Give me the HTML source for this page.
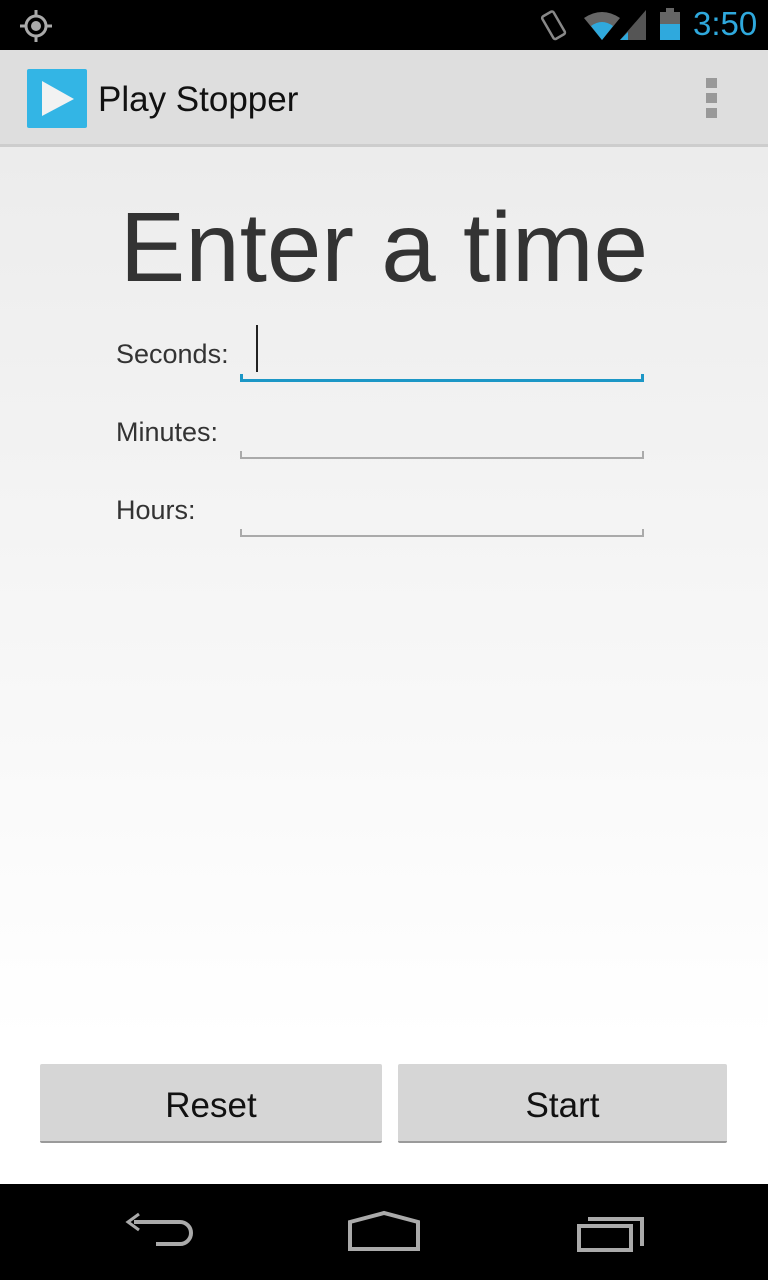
<!DOCTYPE html>
<html><head><style>
*{margin:0;padding:0;box-sizing:border-box}
body{width:768px;height:1280px;position:relative;overflow:hidden;font-family:"Liberation Sans",sans-serif;background:linear-gradient(#ececec 146px,#fff 1040px)}
.abs{position:absolute}
.lbl{position:absolute;left:116px;font-size:27px;color:#333}
.line{position:absolute;left:240px;width:404px;height:8px;border:2px solid #aaa;border-top:none}
.btn{position:absolute;top:1064px;height:79px;background:#d6d6d6;border-bottom:2px solid #9a9a9a;border-radius:2px;font-size:35px;color:#111;text-align:center;line-height:84px}
</style></head><body>
<div class="abs" style="left:0;top:0;width:768px;height:50px;background:#000"></div>
<svg class="abs" style="left:18px;top:8px" width="36" height="36" viewBox="0 0 36 36"><circle cx="18" cy="18" r="10" fill="none" stroke="#aaa" stroke-width="3"/><circle cx="18" cy="18" r="5" fill="#aaa"/><path d="M18 2v6M18 28v6M2 18h6M28 18h6" stroke="#aaa" stroke-width="3"/></svg>
<svg class="abs" style="left:538px;top:8px" width="34" height="36" viewBox="0 0 34 36"><rect x="9" y="4" width="13" height="26" rx="2" transform="rotate(-30 16 17)" fill="none" stroke="#888" stroke-width="2.5"/></svg>
<svg class="abs" style="left:582px;top:10px" width="40" height="32" viewBox="0 0 40 32"><path d="M2 8 Q20 -4 38 8 L20 30Z" fill="#666"/><path d="M9 16 Q20 8 31 16 L20 30Z" fill="#2fa9dd"/></svg>
<svg class="abs" style="left:620px;top:10px" width="28" height="32" viewBox="0 0 28 32"><path d="M26 0V30H0Z" fill="#555"/><path d="M8 22V30H0Z" fill="#2fa9dd"/></svg>
<div class="abs" style="left:660px;top:12px;width:20px;height:28px;background:#666"></div>
<div class="abs" style="left:666px;top:8px;width:8px;height:4px;background:#666"></div>
<div class="abs" style="left:660px;top:24px;width:20px;height:16px;background:#2fa9dd"></div>
<div class="abs" style="left:693px;top:5px;font-size:33px;color:#2fa9dd">3:50</div>
<div class="abs" style="left:0;top:50px;width:768px;height:94px;background:#dedede"></div>
<div class="abs" style="left:0;top:144px;width:768px;height:3px;background:#cdcdcd"></div>
<div class="abs" style="left:27px;top:69px;width:60px;height:59px;background:#33b5e5;border-radius:2px"></div>
<svg class="abs" style="left:27px;top:69px" width="60" height="59"><path d="M15 12L47 30L15 47Z" fill="#f2f2f2"/></svg>
<div class="abs" style="left:98px;top:80px;font-size:35px;color:#111">Play Stopper</div>
<div class="abs" style="left:706px;top:78px;width:11px;height:10px;background:#999"></div>
<div class="abs" style="left:706px;top:93px;width:11px;height:10px;background:#999"></div>
<div class="abs" style="left:706px;top:108px;width:11px;height:10px;background:#999"></div>
<div class="abs" style="left:0;top:191px;width:768px;text-align:center;font-size:98px;color:#333;letter-spacing:0px">Enter a time</div>
<div class="lbl" style="top:339px">Seconds:</div>
<div class="abs" style="left:256px;top:325px;width:2px;height:47px;background:#222"></div>
<div class="line" style="top:374px;border-color:#1c97c6;border-width:3px"></div>
<div class="lbl" style="top:417px">Minutes:</div>
<div class="line" style="top:451px"></div>
<div class="lbl" style="top:495px">Hours:</div>
<div class="line" style="top:529px"></div>
<div class="btn" style="left:40px;width:342px">Reset</div>
<div class="btn" style="left:398px;width:329px">Start</div>
<div class="abs" style="left:0;top:1184px;width:768px;height:96px;background:#000"></div>
<svg class="abs" style="left:120px;top:1210px" width="80" height="50" viewBox="0 0 80 50"><path d="M14 12H60A11 11 0 0 1 60 34H36" fill="none" stroke="#aaa" stroke-width="4"/><path d="M19 4L8 12L19 20" fill="none" stroke="#aaa" stroke-width="3"/></svg>
<svg class="abs" style="left:345px;top:1210px" width="80" height="45" viewBox="0 0 80 45"><path d="M5 12L39 3L73 12V39H5Z" fill="none" stroke="#aaa" stroke-width="4"/></svg>
<svg class="abs" style="left:570px;top:1212px" width="80" height="45" viewBox="0 0 80 45"><rect x="9" y="14" width="52" height="24" fill="none" stroke="#aaa" stroke-width="4"/><path d="M18 7H72V34" fill="none" stroke="#aaa" stroke-width="4"/></svg>
</body></html>
